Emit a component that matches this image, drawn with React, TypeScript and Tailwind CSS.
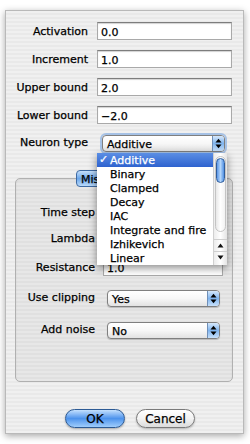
import React from "react";

const Arrows = ({ color = "#000" }: { color?: string }) => (
  <svg width="7" height="11" viewBox="0 0 7 11">
    <polygon points="0.5,4.5 3.5,0.8 6.5,4.5" fill={color} />
    <polygon points="0.5,6.5 3.5,10.2 6.5,6.5" fill={color} />
  </svg>
);

const Field = ({ value, w }: { value: string; w: string }) => (
  <div
    className={`${w} h-[18px] bg-white border border-[#a9a9a9] border-t-[#7d7d7d] shadow-[inset_0_1px_1px_rgba(0,0,0,0.18)] text-[11px] leading-none pl-[3px] pt-[2px] flex items-center text-black`}
  >
    {value}
  </div>
);

const Popup = ({ value, w, focus }: { value: string; w: string; focus?: boolean }) => (
  <div
    className={`${w} h-[17px] rounded-[4px] border border-[#7f7f7f] bg-gradient-to-b from-white via-[#f7f7f7] to-[#e2e2e2] flex items-stretch overflow-hidden ${
      focus ? "shadow-[0_0_0_2px_rgba(110,160,225,0.55)]" : "shadow-[0_1px_1px_rgba(0,0,0,0.2)]"
    }`}
  >
    <div className="flex-1 flex items-center pl-[4px] pt-[2px] text-[11px] leading-none text-black">{value}</div>
    <div className="w-[12px] border-l border-[#6f8fb8] bg-gradient-to-b from-[#d6e8fb] via-[#7fb4ee] to-[#c7e0fa] flex items-center justify-center">
      <Arrows />
    </div>
  </div>
);

const items = ["Additive", "Binary", "Clamped", "Decay", "IAC", "Integrate and fire", "Izhikevich", "Linear"];

export default function App() {
  return (
    <div className="w-[250px] h-[444px] bg-white pt-[10px] pl-[5px] font-['DejaVu_Sans',sans-serif] text-black [-webkit-text-stroke:0.25px_currentColor]">
      <div className="relative w-[239px] h-[424px] border border-[#b9b9b9] shadow-[0_2px_7px_rgba(0,0,0,0.35)] bg-[repeating-linear-gradient(180deg,#f0f0f0_0px,#f0f0f0_2px,#e9e9e9_2px,#e9e9e9_4px)] flex flex-col pt-[11px]">
        {[
          ["Activation", "0.0"],
          ["Increment", "1.0"],
          ["Upper bound", "2.0"],
          ["Lower bound", "\u22122.0"],
        ].map(([l, v], i) => (
          <div key={l} className={`flex items-center ${i ? "mt-[10px]" : ""}`}>
            <div className="w-[82px] text-right text-[11px] leading-none">{l}</div>
            <div className="ml-[9px]">
              <Field value={v} w="w-[135px]" />
            </div>
          </div>
        ))}

        <div className="flex items-center mt-[11px]">
          <div className="w-[82px] text-right text-[11px] leading-none -mt-[3px]">Neuron type</div>
          <div className="ml-[14px]">
            <Popup value="Additive" w="w-[123px]" focus />
          </div>
        </div>

        <div className="relative ml-[9px] mt-[26px] w-[218px] h-[204px] rounded-[5px] border border-[#b0b0b0] bg-[rgba(0,0,0,0.035)] shadow-[inset_0_1px_2px_rgba(0,0,0,0.08)] flex flex-col pt-[24px]">
          <div className="absolute left-[60px] top-[-9px] w-[96px] h-[17px] rounded-[4px] border border-[#3e6aa3] bg-gradient-to-b from-[#c6e0fb] via-[#6aa6ea] to-[#b9dafa] text-[11px] leading-none flex items-center pl-[4px] pt-[2px]">
            Misc
          </div>
          {[
            ["Time step", "", ""],
            ["Lambda", "", "mt-[8px]"],
            ["Resistance", "1.0", "mt-[11px]"],
          ].map(([l, v, m]) => (
            <div key={l} className={`flex items-center ${m}`}>
              <div className="w-[79px] text-right text-[11px] leading-none">{l}</div>
              <div className="ml-[8px]">
                <Field value={v} w="w-[120px]" />
              </div>
            </div>
          ))}
          <div className="flex items-center mt-[14px]">
            <div className="w-[79px] text-right text-[11px] leading-none -mt-[3px]">Use clipping</div>
            <div className="ml-[12px]">
              <Popup value="Yes" w="w-[113px]" />
            </div>
          </div>
          <div className="flex items-center mt-[15px]">
            <div className="w-[79px] text-right text-[11px] leading-none -mt-[3px]">Add noise</div>
            <div className="ml-[12px]">
              <Popup value="No" w="w-[113px]" />
            </div>
          </div>
        </div>

        <div className="flex mt-[27px] pl-[59px]">
          <div className="w-[60px] h-[19px] rounded-full border border-[#2c5a94] bg-gradient-to-b from-[#c4e0fd] via-[#4d93ec] to-[#9fcdfb] shadow-[0_1px_2px_rgba(0,0,0,0.3)] flex items-center justify-center text-[12px] leading-none pt-[1px]">
            OK
          </div>
          <div className="ml-[11px] w-[59px] h-[19px] rounded-full border border-[#7a7a7a] bg-gradient-to-b from-white via-[#f3f3f3] to-[#dcdcdc] shadow-[0_1px_2px_rgba(0,0,0,0.25)] flex items-center justify-center text-[12px] leading-none pt-[1px]">
            Cancel
          </div>
        </div>

        {/* Dropdown menu overlay */}
        <div className="absolute left-[91px] top-[142px] w-[130px] h-[112px] bg-white shadow-[0_3px_8px_rgba(0,0,0,0.45)] flex">
          <div className="flex-1 flex flex-col">
            {items.map((it, i) => (
              <div
                key={it}
                className={`h-[14px] flex items-center text-[11px] leading-none relative pl-[13px] ${
                  i === 0 ? "bg-gradient-to-b from-[#5b8ee4] to-[#2e62cf] text-white" : "text-black"
                }`}
              >
                {i === 0 && <span className="absolute left-[2px] top-[1px] text-[11px]">✓</span>}
                {it}
              </div>
            ))}
          </div>
          <div className="w-[14px] border-l border-[#d0d0d0] bg-gradient-to-r from-[#ececec] via-white to-[#e4e4e4] flex flex-col items-center pt-[3px]">
            <div className="w-[11px] h-[76px] rounded-full border border-[#c4c4c4] bg-gradient-to-r from-[#e8e8e8] via-white to-[#f2f2f2] flex flex-col items-center pt-[1px]">
              <div className="w-[9px] h-[25px] rounded-full border border-[#2f5d9c] bg-gradient-to-r from-[#5d97e6] via-[#b4d6fa] to-[#4f8fe2]" />
            </div>
            <div className="mt-[7px] w-full border-t border-[#cfcfcf] h-[12px] flex items-center justify-center">
              <svg width="7" height="5" viewBox="0 0 7 5">
                <polygon points="0.5,4.5 3.5,0.5 6.5,4.5" fill="#111" />
              </svg>
            </div>
            <div className="w-full border-t border-[#cfcfcf] h-[12px] flex items-center justify-center">
              <svg width="7" height="5" viewBox="0 0 7 5">
                <polygon points="0.5,0.5 3.5,4.5 6.5,0.5" fill="#111" />
              </svg>
            </div>
          </div>
        </div>
      </div>
    </div>
  );
}
